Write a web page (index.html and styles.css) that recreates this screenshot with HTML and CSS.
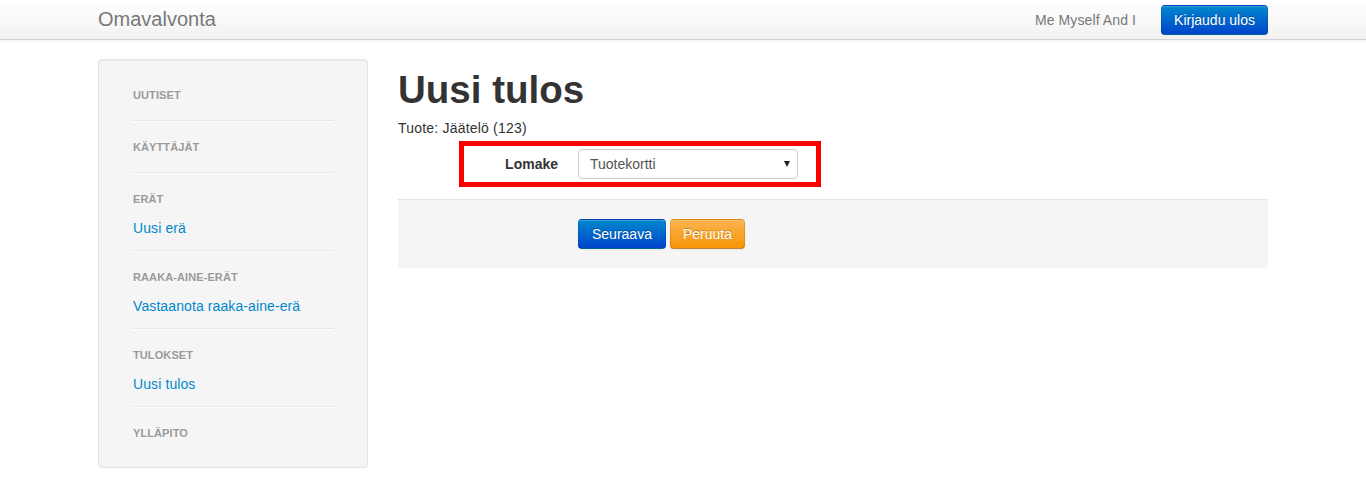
FILE: index.html
```html
<!DOCTYPE html>
<html lang="fi">
<head>
<meta charset="utf-8">
<title>Omavalvonta</title>
<link rel="stylesheet" href="styles.css">
</head>
<body>
<div class="navbar">
  <div class="container navbar-inner">
    <a class="brand" href="#">Omavalvonta</a>
    <div class="navbar-right">
      <span class="navbar-text">Me Myself And I</span>
      <a class="btn btn-primary" href="#">Kirjaudu ulos</a>
    </div>
  </div>
</div>

<div class="container page">
  <aside class="well">
    <ul class="nav-list">
      <li class="nav-header">Uutiset</li>
      <li class="divider"></li>
      <li class="nav-header">Käyttäjät</li>
      <li class="divider"></li>
      <li class="nav-header">Erät</li>
      <li class="nav-link"><a href="#">Uusi erä</a></li>
      <li class="divider"></li>
      <li class="nav-header">Raaka-aine-erät</li>
      <li class="nav-link"><a href="#">Vastaanota raaka-aine-erä</a></li>
      <li class="divider"></li>
      <li class="nav-header">Tulokset</li>
      <li class="nav-link"><a href="#">Uusi tulos</a></li>
      <li class="divider"></li>
      <li class="nav-header">Ylläpito</li>
    </ul>
  </aside>

  <main class="main">
    <h1 class="title">Uusi tulos</h1>
    <p class="product">Tuote: Jäätelö (123)</p>
    <form class="form-horizontal">
      <div class="control-group">
        <label class="control-label">Lomake</label>
        <div class="controls">
          <div class="select">
            <span class="select-text">Tuotekortti</span>
            <span class="select-arrow"></span>
          </div>
        </div>
        <div class="highlight"></div>
      </div>
      <div class="form-actions">
        <button type="button" class="btn btn-primary">Seuraava</button>
        <button type="button" class="btn btn-warning">Peruuta</button>
      </div>
    </form>
  </main>
</div>
</body>
</html>
```

FILE: styles.css
```css
* { box-sizing: border-box; }

html, body {
  margin: 0;
  padding: 0;
}

body {
  font-family: "Liberation Sans", Arial, Helvetica, sans-serif;
  font-size: 14px;
  line-height: 20px;
  color: #333333;
  background: #ffffff;
}

a { color: #0088cc; text-decoration: none; }

.container {
  width: 1170px;
  margin: 0 auto;
}

/* Navbar */
.navbar {
  height: 40px;
  background: linear-gradient(to bottom, #ffffff, #f2f2f2);
  border-bottom: 1px solid #d4d4d4;
  box-shadow: 0 1px 4px rgba(0, 0, 0, 0.065);
}

.navbar-inner {
  display: flex;
  justify-content: space-between;
  align-items: center;
  height: 39px;
}

.brand {
  font-size: 20px;
  line-height: 20px;
  padding: 9px 0 10px;
  color: #777777;
  text-shadow: 0 1px 0 #ffffff;
}

.navbar-right {
  display: flex;
  align-items: center;
  gap: 25px;
}

.navbar-text {
  color: #777777;
  line-height: 20px;
  letter-spacing: 0.1px;
}

/* Buttons */
.btn {
  display: inline-block;
  font-family: inherit;
  font-size: 14px;
  line-height: 20px;
  padding: 4px 12px;
  border-radius: 4px;
  border: 1px solid;
  color: #ffffff;
  text-shadow: 0 -1px 0 rgba(0, 0, 0, 0.25);
  box-shadow: inset 0 1px 0 rgba(255, 255, 255, 0.2), 0 1px 2px rgba(0, 0, 0, 0.05);
  cursor: pointer;
  margin: 0;
}

.btn-primary {
  background: linear-gradient(to bottom, #0088cc, #0044cc);
  border-color: rgba(0, 0, 0, 0.1) rgba(0, 0, 0, 0.1) rgba(0, 0, 0, 0.25);
}

.btn-warning {
  background: linear-gradient(to bottom, #fbb450, #f89406);
  border-color: rgba(0, 0, 0, 0.1) rgba(0, 0, 0, 0.1) rgba(0, 0, 0, 0.25);
}

/* Page */
.page {
  display: flex;
  gap: 30px;
  padding-top: 19px;
  align-items: flex-start;
}

.well {
  width: 270px;
  flex: none;
  background: #f5f5f5;
  border: 1px solid #e3e3e3;
  border-radius: 4px;
  box-shadow: inset 0 1px 1px rgba(0, 0, 0, 0.05);
  padding: 19px 19px 18px;
}

.nav-list {
  list-style: none;
  margin: 0;
  padding: 3px 15px 0;
  display: flex;
  flex-direction: column;
}

.nav-header {
  font-size: 11px;
  font-weight: bold;
  line-height: 20px;
  padding: 3px 0;
  margin-bottom: 3px;
  color: #999999;
  text-transform: uppercase;
  text-shadow: 0 1px 0 rgba(255, 255, 255, 0.5);
  letter-spacing: 0.1px;
}

.nav-link a {
  display: block;
  padding: 3px 0;
  line-height: 20px;
  letter-spacing: 0.1px;
}

.divider {
  height: 2px;
  background: #e5e5e5;
  border-bottom: 1px solid #ffffff;
  margin: 9px 0 12px;
}

/* Main */
.main {
  width: 870px;
  flex: none;
}

.title {
  font-size: 38.5px;
  line-height: 40px;
  font-weight: bold;
  margin: 11px 0 8px;
  color: #333333;
}

.product {
  margin: 0 0 11px;
  letter-spacing: 0.2px;
}

.form-horizontal {
  margin: 0;
}

.control-group {
  position: relative;
  display: flex;
  margin-bottom: 20px;
}

.control-label {
  width: 160px;
  padding-top: 5px;
  text-align: right;
  font-weight: bold;
  color: #333333;
  flex: none;
}

.controls {
  margin-left: 20px;
}

.select {
  width: 220px;
  height: 30px;
  border: 1px solid #cccccc;
  border-radius: 4px;
  background: #ffffff;
  display: flex;
  align-items: center;
  justify-content: space-between;
  padding: 0 7px 0 11px;
  color: #555555;
}

.select-arrow {
  width: 0;
  height: 0;
  border-left: 3px solid transparent;
  border-right: 3px solid transparent;
  border-top: 6px solid #222222;
}

.highlight {
  position: absolute;
  left: 61px;
  top: -8px;
  width: 362px;
  height: 46px;
  border: 5px solid #ff0000;
  pointer-events: none;
}

.form-actions {
  background: #f5f5f5;
  border-top: 1px solid #e5e5e5;
  padding: 19px 20px 19px 180px;
  margin: 0;
  display: flex;
  gap: 4px;
}

.form-actions .btn {
  padding: 4px 13px;
}

.form-actions .btn-warning {
  padding: 4px 12px;
}
```
